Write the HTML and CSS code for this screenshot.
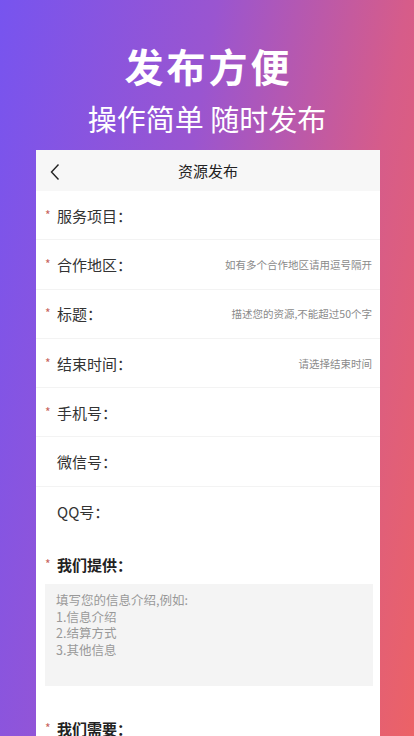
FILE: index.html
```html
<!DOCTYPE html>
<html lang="zh-CN">
<head>
<meta charset="utf-8">
<meta name="viewport" content="width=414">
<link rel="stylesheet" href="styles.css">
</head>
<body>
<div class="page">
  <div class="hero">
    <h1 class="title">发布方便</h1>
    <p class="subtitle">操作简单 随时发布</p>
  </div>
  <div class="card">
    <div class="topbar">
      <svg class="back" width="12" height="18" viewBox="0 0 12 18"><path d="M9.5 1.5 L2.5 9 L9.5 16.5" fill="none" stroke="#222" stroke-width="1.4"/></svg>
      <span class="topbar-title">资源发布</span>
    </div>
    <div class="row"><span class="star">*</span><span class="label">服务项目：</span><span class="ph"></span></div>
    <div class="row"><span class="star">*</span><span class="label">合作地区：</span><span class="ph">如有多个合作地区请用逗号隔开</span></div>
    <div class="row"><span class="star">*</span><span class="label">标题：</span><span class="ph">描述您的资源,不能超过50个字</span></div>
    <div class="row"><span class="star">*</span><span class="label">结束时间：</span><span class="ph">请选择结束时间</span></div>
    <div class="row"><span class="star">*</span><span class="label">手机号：</span><span class="ph"></span></div>
    <div class="row"><span class="star hidden">*</span><span class="label">微信号：</span><span class="ph"></span></div>
    <div class="row last"><span class="star hidden">*</span><span class="label">QQ号：</span><span class="ph"></span></div>
    <div class="section"><span class="star">*</span><span class="label bold">我们提供：</span></div>
    <div class="textarea">填写您的信息介绍,例如:<br>1.信息介绍<br>2.结算方式<br>3.其他信息</div>
    <div class="section second"><span class="star">*</span><span class="label bold">我们需要：</span></div>
  </div>
</div>
</body>
</html>
```
FILE: styles.css
```css
* { box-sizing: border-box; }
html, body { margin: 0; padding: 0; }
body {
  width: 414px;
  height: 736px;
  overflow: hidden;
  font-family: "Noto Sans CJK SC", "Noto Sans", sans-serif;
}
.page {
  width: 414px;
  height: 736px;
  background: linear-gradient(100deg, #7754ef 0%, #9a55d0 40%, #d65c8a 75%, #ec6266 100%);
  display: flex;
  flex-direction: column;
  align-items: center;
}
.hero {
  padding-top: 41px;
  display: flex;
  flex-direction: column;
  align-items: center;
  color: #fff;
}
.title {
  margin: 0;
  font-size: 39px;
  line-height: 48px;
  font-weight: 700;
  letter-spacing: 3px;
  padding-left: 3px;
}
.subtitle {
  margin: 11px 0 0;
  font-size: 29px;
  line-height: 36px;
  font-weight: 400;
}
.card {
  margin-top: 14px;
  margin-left: 2px;
  width: 344px;
  flex: 1;
  background: #fff;
  display: flex;
  flex-direction: column;
}
.topbar {
  height: 41px;
  background: #f7f7f7;
  display: flex;
  align-items: center;
  justify-content: center;
  position: relative;
}
.back {
  position: absolute;
  left: 13px;
  top: 13px;
}
.topbar-title {
  font-size: 15px;
  color: #222;
}
.row {
  height: 49.3px;
  display: flex;
  align-items: center;
  padding: 0 8px 0 9px;
  border-bottom: 1px solid #f3f3f3;
}
.row.last { border-bottom: none; }
.star {
  color: #c8635d;
  font-size: 12px;
  width: 12px;
  position: relative;
  top: -1px;
}
.star.hidden { visibility: hidden; }
.label {
  font-size: 15px;
  color: #333;
}
.label.bold {
  font-weight: 700;
  color: #222;
}
.ph {
  margin-left: auto;
  font-size: 10.5px;
  color: #8a8a8a;
}
.section {
  display: flex;
  align-items: center;
  padding: 0 9px;
  margin-top: 17px;
  height: 22px;
}
.section.second { margin-top: 31px; }
.textarea {
  margin: 9px 7px 0 9px;
  height: 102px;
  background: #f4f4f4;
  padding: 8px 11px;
  font-size: 12.5px;
  line-height: 16.5px;
  color: #999;
}
```
